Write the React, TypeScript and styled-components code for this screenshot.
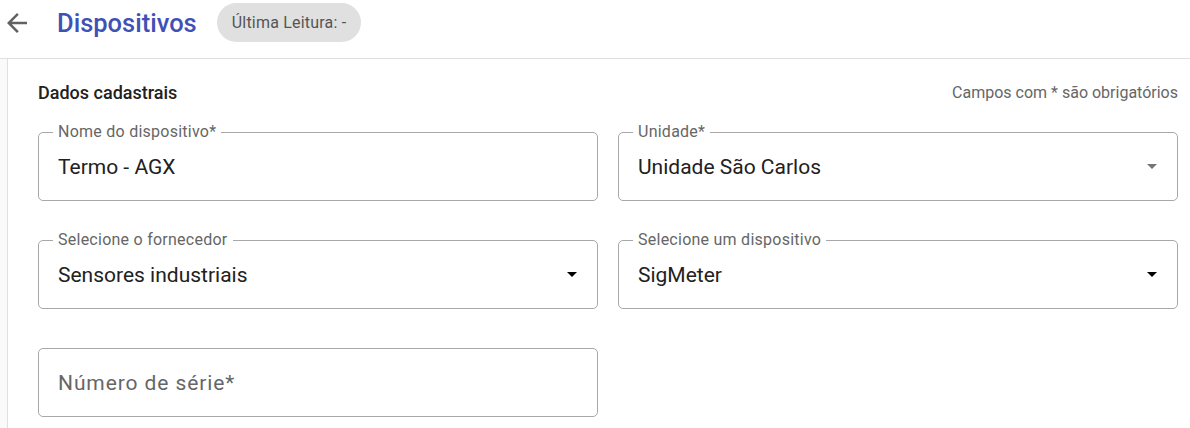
import styled, { createGlobalStyle } from 'styled-components';

const GlobalStyle = createGlobalStyle`
  html, body {
    margin: 0;
    padding: 0;
    background: #ffffff;
    font-family: Roboto, "Liberation Sans", Arial, sans-serif;
  }
  * {
    box-sizing: border-box;
  }
`;

const Page = styled.div`
  width: 1190px;
  height: 428px;
  overflow: hidden;
  display: flex;
  flex-direction: column;
`;

const Header = styled.header`
  display: flex;
  align-items: center;
  height: 59px;
  padding: 3px 0 16px 2px;
  border-bottom: 1px solid #e0e0e0;
`;

const BackButton = styled.button`
  display: flex;
  align-items: center;
  justify-content: center;
  width: 30px;
  height: 30px;
  padding: 0;
  border: none;
  background: none;
  color: #616161;
  cursor: pointer;
`;

const Title = styled.h1`
  margin: 0 0 0 25px;
  font-size: 25.5px;
  font-weight: 500;
  color: #3f51b5;
`;

const Chip = styled.span`
  display: inline-flex;
  align-items: center;
  height: 39px;
  margin-left: 20px;
  padding: 0 15px;
  border-radius: 20px;
  background: #e0e0e0;
  font-size: 16px;
  letter-spacing: 0.2px;
  color: #555555;
`;

const Body = styled.div`
  flex: 1;
  display: flex;
`;

const SideStrip = styled.div`
  width: 8px;
  background: #fafafa;
  border-right: 1px solid #e0e0e0;
`;

const Content = styled.main`
  flex: 1;
  padding: 22px 12px 0 30px;
`;

const SectionHead = styled.div`
  display: flex;
  align-items: center;
  justify-content: space-between;
  height: 22px;
  margin-bottom: 29px;
`;

const SectionTitle = styled.h2`
  margin: 0;
  font-size: 18px;
  font-weight: 500;
  color: #212121;
`;

const Hint = styled.span`
  font-size: 16px;
  color: #666666;
`;

const FieldGrid = styled.div`
  display: grid;
  grid-template-columns: 560px 560px;
  column-gap: 20px;
  row-gap: 39px;
`;

const Field = styled.div`
  position: relative;
  display: flex;
  align-items: center;
  height: 69px;
  padding: 0 20px 0 19px;
  border: 1px solid #a8a8a8;
  border-radius: 5px;
`;

const FloatLabel = styled.label`
  position: absolute;
  top: -10px;
  left: 14px;
  padding: 0 5px;
  background: #ffffff;
  font-size: 16px;
  line-height: 18px;
  letter-spacing: 0.25px;
  color: #666666;
`;

const Value = styled.span<{ $placeholder?: boolean }>`
  flex: 1;
  font-size: 21px;
  color: ${({ $placeholder }) => ($placeholder ? '#666666' : '#212121')};
  letter-spacing: ${({ $placeholder }) => ($placeholder ? '0.9px' : '0')};
`;

const Caret = styled.span<{ $muted?: boolean }>`
  width: 0;
  height: 0;
  border-left: 5px solid transparent;
  border-right: 5px solid transparent;
  border-top: 5px solid ${({ $muted }) => ($muted ? '#757575' : '#000000')};
`;

type FieldProps = {
  label?: string;
  value: string;
  select?: boolean;
  muted?: boolean;
  placeholder?: boolean;
};

const FormField = ({ label, value, select, muted, placeholder }: FieldProps) => (
  <Field>
    {label && <FloatLabel>{label}</FloatLabel>}
    <Value $placeholder={placeholder}>{value}</Value>
    {select && <Caret $muted={muted} />}
  </Field>
);

export default function App() {
  return (
    <>
      <GlobalStyle />
      <Page>
        <Header>
          <BackButton aria-label="Voltar">
            <svg width="30" height="30" viewBox="0 0 24 24" fill="currentColor">
              <path d="M20 11H7.83l5.59-5.59L12 4l-8 8 8 8 1.41-1.41L7.83 13H20v-2z" />
            </svg>
          </BackButton>
          <Title>Dispositivos</Title>
          <Chip>Última Leitura: -</Chip>
        </Header>
        <Body>
          <SideStrip />
          <Content>
            <SectionHead>
              <SectionTitle>Dados cadastrais</SectionTitle>
              <Hint>Campos com * são obrigatórios</Hint>
            </SectionHead>
            <FieldGrid>
              <FormField label="Nome do dispositivo*" value="Termo - AGX" />
              <FormField label="Unidade*" value="Unidade São Carlos" select muted />
              <FormField label="Selecione o fornecedor" value="Sensores industriais" select />
              <FormField label="Selecione um dispositivo" value="SigMeter" select />
              <FormField value="Número de série*" placeholder />
            </FieldGrid>
          </Content>
        </Body>
      </Page>
    </>
  );
}
